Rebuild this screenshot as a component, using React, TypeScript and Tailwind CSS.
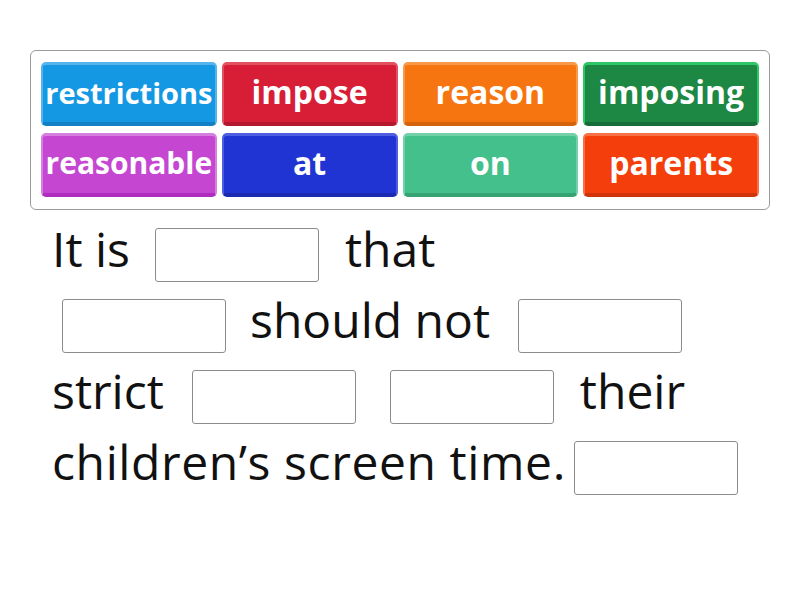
const tiles = [
  { word: "restrictions", face: "bg-[#1598e3]", edge: "border-[#55b4ec] border-b-[#1180c4]", size: "text-[29px]" },
  { word: "impose", face: "bg-[#d81e36]", edge: "border-[#e2515f] border-b-[#b5182c]", size: "text-[32px]" },
  { word: "reason", face: "bg-[#f67510]", edge: "border-[#f8984a] border-b-[#d5630c]", size: "text-[32px]" },
  { word: "imposing", face: "bg-[#1d8744]", edge: "border-[#2dc766] border-b-[#176d37]", size: "text-[32px]" },
  { word: "reasonable", face: "bg-[#c546d1]", edge: "border-[#d57fde] border-b-[#b02cbf]", size: "text-[30px]" },
  { word: "at", face: "bg-[#2034d4]", edge: "border-[#4d5fe0] border-b-[#1a2bb2]", size: "text-[32px]" },
  { word: "on", face: "bg-[#43c08b]", edge: "border-[#72d1a8] border-b-[#35a374]", size: "text-[32px]" },
  { word: "parents", face: "bg-[#f43f0c]", edge: "border-[#f77046] border-b-[#cf340a]", size: "text-[32px]" },
];

// empty answer slot, nudged down so the text sits high against it
const Blank = ({ className = "" }: { className?: string }) => (
  <span
    className={`inline-block w-[164px] h-[54px] mt-[12px] shrink-0 rounded-[3px] border border-[#8c8c8c] bg-white ${className}`}
  />
);

const Word = ({ children, className = "" }: { children: React.ReactNode; className?: string }) => (
  <span className={`whitespace-pre ${className}`}>{children}</span>
);

export default function App() {
  return (
    <div
      className="w-[800px] h-[600px] bg-white overflow-hidden"
      style={{ fontFamily: '"Open Sans", sans-serif' }}
    >
      <div className="ml-[30px] mt-[50px] w-[740px] h-[160px] rounded-[6px] border border-[#9a9a9a] px-[10px] pt-[11px]">
        <div className="grid grid-cols-4 gap-x-[5px] gap-y-[7px]">
          {tiles.map((t) => (
            <div
              key={t.word}
              className={`h-[64px] rounded-[5px] border-x-2 border-t-[3px] border-b-[4px] ${t.edge} ${t.face} flex items-center justify-center`}
            >
              <span className={`text-white font-bold ${t.size} leading-none -mt-[3px]`}>
                {t.word}
              </span>
            </div>
          ))}
        </div>
      </div>

      <div className="pl-[52px] pt-[3px] text-[48px] text-[#111] leading-[71px]">
        <div className="flex items-center h-[71px]">
          <Word>It is</Word>
          <Blank className="ml-[25px] mr-[26px]" />
          <Word>that</Word>
        </div>
        <div className="flex items-center h-[71px]">
          <Blank className="ml-[10px] mr-[24px]" />
          <Word>should not</Word>
          <Blank className="ml-[28px]" />
        </div>
        <div className="flex items-center h-[71px]">
          <Word>strict</Word>
          <Blank className="ml-[28px]" />
          <Blank className="ml-[34px] mr-[26px]" />
          <Word>their</Word>
        </div>
        <div className="flex items-center h-[71px]">
          <Word className="tracking-[0.6px]">children’s screen time.</Word>
          <Blank className="ml-[8px]" />
        </div>
      </div>
    </div>
  );
}
